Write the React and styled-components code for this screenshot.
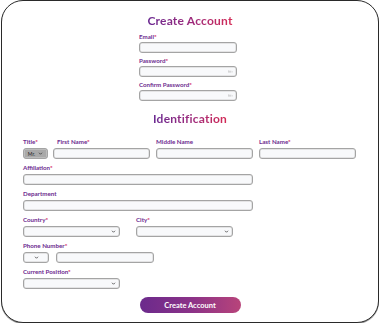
import React from "react";
import styled, { createGlobalStyle } from "styled-components";

const GlobalStyle = createGlobalStyle`
  html, body { margin: 0; padding: 0; background: #fff; }
  body { font-family: "Lato", "Noto Sans", sans-serif; }
`;

const Card = styled.div`
  box-sizing: border-box;
  margin-left: 1px;
  width: 378px;
  height: 323px;
  border: 1px solid #2a2a2a;
  border-radius: 22px;
  box-shadow: 0 1px 0 #9a9a9a;
  background: #fff;
  padding: 12px 0 0;
`;

const Heading = styled.h2`
  margin: 0 auto;
  text-align: center;
  font-size: 12px;
  line-height: 16px;
  font-weight: 700;
  letter-spacing: 0.2px;
  background: linear-gradient(90deg, #6a2a92 0%, #a02a7a 55%, #d42a55 100%);
  -webkit-background-clip: text;
  background-clip: text;
  color: transparent;
  width: fit-content;
`;

const AccountBlock = styled.div`
  width: 98px;
  margin: 0 0 0 137px;
  display: flex;
  flex-direction: column;
`;

const Field = styled.div`
  display: flex;
  flex-direction: column;
  width: ${(p) => p.$w || "auto"};
`;

const Label = styled.label`
  display: block;
  height: ${(p) => (p.$tall ? 15 : 13)}px;
  line-height: ${(p) => (p.$tall ? 18 : 15)}px;
  font-size: 6.2px;
  font-weight: 700;
  color: #6d2b8f;
  white-space: nowrap;
  padding-left: ${(p) => p.$indent || 0}px;
  span {
    color: #d6336c;
  }
`;

const InputBox = styled.div`
  box-sizing: border-box;
  width: ${(p) => p.$w || "100%"};
  height: 11px;
  border: 1px solid #a4a4a4;
  border-radius: 3px;
  background: ${(p) => (p.$gray ? "#a9a9a9" : "#f8f9fb")};
  box-shadow: inset 0 0 0 0.5px #d0d0d0;
  display: flex;
  align-items: center;
  justify-content: ${(p) => (p.$center ? "center" : "flex-end")};
  padding: 0 3px;
  gap: 3px;
  font-size: 5px;
  color: #222;
`;

const Chevron = () => (
  <svg width="5" height="3" viewBox="0 0 6 4">
    <path d="M1 1 L3 3 L5 1" fill="none" stroke="#333" strokeWidth="1" />
  </svg>
);

const Eye = () => (
  <svg width="5" height="3" viewBox="0 0 6 4">
    <path d="M0.5 0.5v3M2 1v2.5M3.5 1v2.5M5 2.5h1" stroke="#aaa" strokeWidth="0.7" fill="none" />
  </svg>
);

const Section = styled.div`
  padding: 0 0 0 21px;
  display: flex;
  flex-direction: column;
`;

const Row = styled.div`
  display: flex;
  gap: ${(p) => p.$gap || 6}px;
  align-items: flex-start;
`;

const IdHeading = styled(Heading)`
  margin-top: 10px;
  margin-bottom: 6px;
`;

const ButtonRow = styled.div`
  display: flex;
  justify-content: center;
  margin-top: 8px;
`;

const Button = styled.button`
  width: 101px;
  height: 16px;
  border: none;
  border-radius: 8px;
  background: linear-gradient(90deg, #6b2a8c 0%, #8a3288 50%, #b8447a 100%);
  color: #fff;
  font-family: "Lato", sans-serif;
  font-size: 7.5px;
  font-weight: 700;
  padding: 0;
`;

const Req = () => <span>*</span>;

export default function App() {
  return (
    <>
      <GlobalStyle />
      <Card>
        <Heading>Create Account</Heading>
        <AccountBlock>
          <Field>
            <Label>
              Email<Req />
            </Label>
            <InputBox />
          </Field>
          <Field>
            <Label>
              Password<Req />
            </Label>
            <InputBox>
              <Eye />
            </InputBox>
          </Field>
          <Field>
            <Label>
              Confirm Password<Req />
            </Label>
            <InputBox>
              <Eye />
            </InputBox>
          </Field>
        </AccountBlock>

        <IdHeading>Identification</IdHeading>

        <Section>
          <Row $gap={5}>
            <Field $w="25px">
              <Label $tall>
                Title<Req />
              </Label>
              <InputBox $gray $center>
                Mr. <Chevron />
              </InputBox>
            </Field>
            <Row $gap={6}>
              <Field $w="97px">
                <Label $tall $indent={4}>
                  First Name<Req />
                </Label>
                <InputBox />
              </Field>
              <Field $w="97px">
                <Label $tall>Middle Name</Label>
                <InputBox />
              </Field>
              <Field $w="97px">
                <Label $tall>
                  Last Name<Req />
                </Label>
                <InputBox />
              </Field>
            </Row>
          </Row>

          <Field $w="230px">
            <Label $tall>
              Affiliation<Req />
            </Label>
            <InputBox />
          </Field>
          <Field $w="230px">
            <Label $tall>Department</Label>
            <InputBox />
          </Field>

          <Row $gap={16}>
            <Field $w="97px">
              <Label $tall>
                Country<Req />
              </Label>
              <InputBox>
                <Chevron />
              </InputBox>
            </Field>
            <Field $w="97px">
              <Label $tall>
                City<Req />
              </Label>
              <InputBox>
                <Chevron />
              </InputBox>
            </Field>
          </Row>

          <Field>
            <Label $tall>
              Phone Number<Req />
            </Label>
            <Row $gap={7}>
              <InputBox $w="26px" $center>
                <Chevron />
              </InputBox>
              <InputBox $w="98px" />
            </Row>
          </Field>

          <Field $w="97px">
            <Label $tall>
              Current Position<Req />
            </Label>
            <InputBox>
              <Chevron />
            </InputBox>
          </Field>
        </Section>

        <ButtonRow>
          <Button>Create Account</Button>
        </ButtonRow>
      </Card>
    </>
  );
}
